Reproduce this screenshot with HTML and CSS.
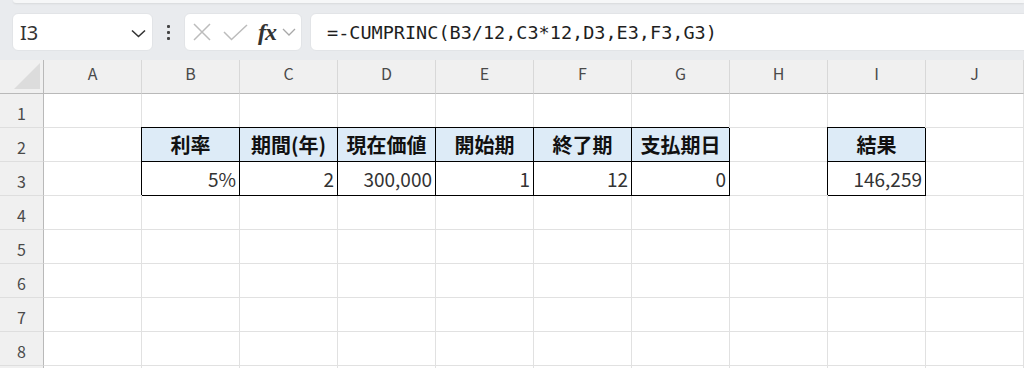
FILE: index.html
```html
<!DOCTYPE html>
<html>
    <head>
        <meta charset="utf-8">
        <title>CUMPRINC</title>
        <link rel="stylesheet" href="styles.css">
    </head>
    <body>
        <div class="ribbon-edge"></div>
        <div class="toolbar">
            <div class="namebox">
                <span>I3</span>
                <svg width="15" height="9" viewBox="0 0 15 9"><path d="M1 1.5 L7.5 7.5 L14 1.5" fill="none" stroke="#333" stroke-width="1.6"/></svg>
            </div>
            <div class="dots"><i></i><i></i><i></i></div>
            <div class="fxbox">
                <svg width="18" height="18" viewBox="0 0 18 18"><path d="M1 1 L17 17 M17 1 L1 17" stroke="#bcbcbc" stroke-width="1.5"/></svg>
                <svg width="25" height="17" viewBox="0 0 25 17"><path d="M1 8 L8.5 15.5 L24 1" fill="none" stroke="#bcbcbc" stroke-width="1.5"/></svg>
                <span class="fx">fx</span>
                <svg width="14" height="8" viewBox="0 0 14 8"><path d="M1 1 L7 7 L13 1" fill="none" stroke="#a8a8a8" stroke-width="1.3"/></svg>
            </div>
            <div class="formula">=-CUMPRINC(B3/12,C3*12,D3,E3,F3,G3)</div>
        </div>

        <div class="sheet">
            <div class="corner"><div class="tri"></div></div>
            <div class="colhead">A</div><div class="colhead">B</div><div class="colhead">C</div><div class="colhead">D</div><div class="colhead">E</div>
            <div class="colhead">F</div><div class="colhead">G</div><div class="colhead">H</div><div class="colhead">I</div><div class="colhead">J</div>

            <div class="rowhead">1</div>
            <div class="cell"></div><div class="cell"></div><div class="cell"></div><div class="cell"></div><div class="cell"></div>
            <div class="cell"></div><div class="cell"></div><div class="cell"></div><div class="cell"></div><div class="cell"></div>

            <div class="rowhead">2</div>
            <div class="cell"></div>
            <div class="cell th">利率</div>
            <div class="cell th">期間(年)</div>
            <div class="cell th">現在価値</div>
            <div class="cell th">開始期</div>
            <div class="cell th">終了期</div>
            <div class="cell th">支払期日</div>
            <div class="cell"></div>
            <div class="cell th">結果</div>
            <div class="cell"></div>

            <div class="rowhead">3</div>
            <div class="cell"></div>
            <div class="cell td">5%</div>
            <div class="cell td">2</div>
            <div class="cell td">300,000</div>
            <div class="cell td">1</div>
            <div class="cell td">12</div>
            <div class="cell td">0</div>
            <div class="cell"></div>
            <div class="cell td">146,259</div>
            <div class="cell"></div>

            <div class="rowhead">4</div>
            <div class="cell"></div><div class="cell"></div><div class="cell"></div><div class="cell"></div><div class="cell"></div>
            <div class="cell"></div><div class="cell"></div><div class="cell"></div><div class="cell"></div><div class="cell"></div>

            <div class="rowhead">5</div>
            <div class="cell"></div><div class="cell"></div><div class="cell"></div><div class="cell"></div><div class="cell"></div>
            <div class="cell"></div><div class="cell"></div><div class="cell"></div><div class="cell"></div><div class="cell"></div>

            <div class="rowhead">6</div>
            <div class="cell"></div><div class="cell"></div><div class="cell"></div><div class="cell"></div><div class="cell"></div>
            <div class="cell"></div><div class="cell"></div><div class="cell"></div><div class="cell"></div><div class="cell"></div>

            <div class="rowhead">7</div>
            <div class="cell"></div><div class="cell"></div><div class="cell"></div><div class="cell"></div><div class="cell"></div>
            <div class="cell"></div><div class="cell"></div><div class="cell"></div><div class="cell"></div><div class="cell"></div>

            <div class="rowhead">8</div>
            <div class="cell"></div><div class="cell"></div><div class="cell"></div><div class="cell"></div><div class="cell"></div>
            <div class="cell"></div><div class="cell"></div><div class="cell"></div><div class="cell"></div><div class="cell"></div>

            <div class="rowhead"></div>
            <div class="cell"></div><div class="cell"></div><div class="cell"></div><div class="cell"></div><div class="cell"></div>
            <div class="cell"></div><div class="cell"></div><div class="cell"></div><div class="cell"></div><div class="cell"></div>
        </div>
    </body>
</html>
```

FILE: styles.css
```css
html, body{
    margin: 0;
    width: 1024px;
    height: 368px;
    overflow: hidden;
}
body{
    background: linear-gradient(#e9ebee 0, #e9ebee 60px, #fff 60px);
}
.ribbon-edge{
    height: 3px;
    margin-left: 13px;
    background-color: #f6f7f8;
    border-bottom-left-radius: 6px;
    box-shadow: 0 1px 2px rgba(0,0,0,0.08);
    position: relative;
}
.toolbar{
    height: 57px;
    box-sizing: border-box;
    padding: 10px 0 0 12px;
    display: flex;
    align-items: flex-start;
}
.namebox, .fxbox, .formula{
    height: 38px;
    box-sizing: border-box;
    background-color: #fff;
    border: 1px solid #e2e4e7;
    border-radius: 6px;
    display: flex;
    align-items: center;
}
.namebox{
    width: 141px;
    padding: 0 6px 0 7px;
    justify-content: space-between;
    font-family: "Noto Sans", sans-serif;
    font-size: 20px;
    color: #333;
}
.namebox svg{
    margin-top: 2px;
}
.dots{
    width: 31px;
    height: 38px;
    display: flex;
    flex-direction: column;
    align-items: center;
    justify-content: center;
    gap: 3px;
}
.dots i{
    width: 3px;
    height: 3px;
    background-color: #444;
    border-radius: 1px;
}
.fxbox{
    width: 118px;
    padding-left: 8px;
}
.fxbox svg:nth-child(2){
    margin-left: 12px;
}
.fx{
    font-family: "Liberation Serif", serif;
    font-style: italic;
    font-weight: bold;
    font-size: 24px;
    color: #333;
    margin-left: 10px;
    margin-right: 6px;
    letter-spacing: -1px;
}
.formula{
    flex: 1;
    margin-left: 8px;
    margin-right: -10px;
    padding-left: 16px;
    font-family: "DejaVu Sans Mono", monospace;
    font-size: 18.5px;
    color: #1e1e1e;
}

.sheet{
    display: grid;
    grid-template-columns: 44px repeat(10, 98px);
    grid-template-rows: 34px repeat(9, 34px);
}
.corner, .colhead, .rowhead{
    background-color: #f0f0f0;
    box-sizing: border-box;
    font-family: "Noto Sans CJK JP", sans-serif;
    font-size: 16px;
    color: #4a4a4a;
    display: flex;
    align-items: center;
    justify-content: center;
}
.corner{
    border-right: 1px solid #b9b9b9;
    border-bottom: 1px solid #b9b9b9;
    align-items: flex-end;
    justify-content: flex-end;
    padding: 0 3px 4px 0;
}
.tri{
    width: 26px;
    height: 26px;
    background-color: #dcdcdc;
    clip-path: polygon(100% 0, 100% 100%, 0 100%);
}
.colhead{
    border-right: 1px solid #d8d8d8;
    border-bottom: 1px solid #b9b9b9;
    padding-bottom: 8px;
}
.rowhead{
    border-right: 1px solid #b9b9b9;
    border-bottom: 1px solid #dedede;
    padding-top: 4px;
}
.cell{
    box-sizing: border-box;
    border-right: 1px solid #e1e1e1;
    border-bottom: 1px solid #e1e1e1;
    font-family: "Noto Sans CJK JP", sans-serif;
    color: #111;
    display: flex;
    align-items: center;
}
.th, .td{
    border-right-color: #000;
    border-bottom-color: #000;
    box-shadow: -1px -1px 0 #000;
}
.th{
    background-color: #ddebf7;
    font-size: 20px;
    font-weight: bold;
    justify-content: center;
}
.td{
    font-size: 19px;
    color: #333;
    justify-content: flex-end;
    padding-right: 3px;
}
```
